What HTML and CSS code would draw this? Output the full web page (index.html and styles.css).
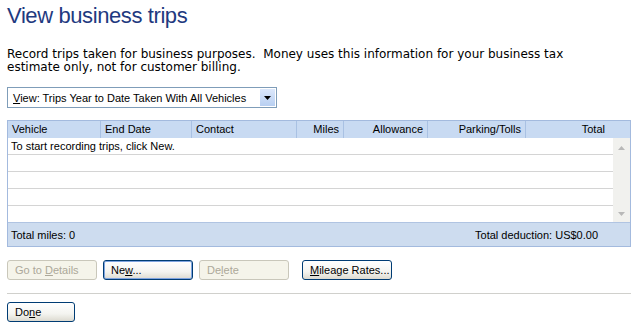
FILE: index.html
```html
<!DOCTYPE html>
<html lang="en">

<head>
    <meta charset="UTF-8">
    <title>View business trips</title>
    <link rel="stylesheet" href="styles.css">
</head>

<body>
    <div class="page">
        <h1 class="title">View business trips</h1>
        <p class="intro">Record trips taken for business purposes.&nbsp; Money uses this information for your business tax estimate only, not for customer billing.</p>

        <div class="select">
            <span class="select-text"><u>V</u>iew: Trips Year to Date Taken With All Vehicles</span>
            <span class="select-btn">
                <svg width="7" height="4" viewBox="0 0 7 4"><path d="M0 0H7L3.5 4Z" fill="#000"/></svg>
            </span>
        </div>

        <div class="grid">
            <div class="head">
                <span class="c1">Vehicle</span>
                <span class="c2">End Date</span>
                <span class="c3">Contact</span>
                <span class="c4 num">Miles</span>
                <span class="c5 num">Allowance</span>
                <span class="c6 num">Parking/Tolls</span>
                <span class="c7 num">Total</span>
            </div>
            <div class="body">
                <div class="rows">
                    <div class="row">To start recording trips, click New.</div>
                    <div class="row"></div>
                    <div class="row"></div>
                    <div class="row"></div>
                    <div class="row last"></div>
                </div>
                <div class="scroll">
                    <svg width="7" height="4" viewBox="0 0 7 4"><path d="M0 4H7L3.5 0Z" fill="#b8b8b8"/></svg>
                    <svg width="7" height="4" viewBox="0 0 7 4"><path d="M0 0H7L3.5 4Z" fill="#b8b8b8"/></svg>
                </div>
            </div>
            <div class="foot">
                <span>Total miles: 0</span>
                <span>Total deduction: US$0.00</span>
            </div>
        </div>

        <div class="actions">
            <button class="btn" disabled>Go to <u>D</u>etails</button>
            <button class="btn focus">Ne<u>w</u>...</button>
            <button class="btn" disabled>De<u>l</u>ete</button>
            <button class="btn wide-gap"><u>M</u>ileage Rates...</button>
        </div>
        <hr class="sep">
        <button class="btn done">Do<u>n</u>e</button>
    </div>
</body>

</html>
```

FILE: styles.css
```css
body {
    margin: 0;
    background: #fff;
    font-family: "Liberation Sans", Arial, sans-serif;
    font-size: 11px;
    color: #000;
}

.page {
    padding: 0 6px 0 7px;
}

.title {
    margin: 0;
    padding-top: 3px;
    height: 30px;
    font-size: 22px;
    font-weight: normal;
    color: #1f3a80;
    line-height: 26px;
    letter-spacing: -0.4px;
}

.intro {
    margin: 15px 0 0;
    width: 600px;
    font-family: "DejaVu Sans", sans-serif;
    font-size: 12px;
    line-height: 13px;
    letter-spacing: 0;
}

.select {
    margin-top: 13px;
    width: 268px;
    height: 19px;
    border: 1px solid #7f9db9;
    display: flex;
    align-items: center;
    justify-content: space-between;
}

.select-text {
    padding-left: 5px;
}

.select-btn {
    width: 15px;
    height: 17px;
    margin-right: 1px;
    background: linear-gradient(#dce8fb, #b8cff2);
    display: flex;
    align-items: center;
    justify-content: center;
}

.grid {
    margin-top: 12px;
    width: 622px;
    border: 1px solid #a3bade;
}

.head {
    display: flex;
    height: 17px;
    background: #c8daf2;
    line-height: 16px;
}

.head span {
    box-sizing: border-box;
    padding: 0 4px;
    border-right: 1px solid #a9c1e3;
}

.head .num {
    text-align: right;
}

.head .c7 {
    border-right: none;
    padding-right: 25px;
}

.c1 { width: 93px; }
.c2 { width: 91px; }
.c3 { width: 105px; }
.c4 { width: 47px; }
.c5 { width: 84px; }
.c6 { width: 98px; }
.c7 { width: 104px; }

.body {
    display: flex;
}

.rows {
    flex: 1;
}

.row {
    height: 16px;
    border-bottom: 1px solid #d4d4d4;
    padding-left: 3px;
    line-height: 16px;
}

.row.last {
    border-bottom: none;
    height: 16px;
}

.scroll {
    width: 17px;
    background: #f1f1ee;
    display: flex;
    flex-direction: column;
    justify-content: space-between;
    align-items: center;
    padding: 8px 0 6px;
    box-sizing: border-box;
}

.foot {
    display: flex;
    justify-content: space-between;
    height: 23px;
    line-height: 24px;
    padding: 0 32px 0 3px;
    background: #cddcef;
    border-top: 1px solid #b0c4e2;
}

.actions {
    margin-top: 13px;
    display: flex;
    gap: 6px;
}

.btn {
    width: 90px;
    height: 20px;
    padding: 0 0 0 7px;
    text-align: left;
    white-space: nowrap;
    font-family: inherit;
    font-size: 11px;
    color: #000;
    border: 1px solid #003c74;
    border-radius: 3px;
    background: linear-gradient(#ffffff, #f4f4f0 60%, #dcdad0);
}

.btn:disabled {
    color: #aca899;
    border-color: #c9c7ba;
    background: #f5f4ea;
}

.btn.focus {
    box-shadow: inset 0 0 0 1px #7fa4e0;
}

.wide-gap {
    margin-left: 7px;
}

.sep {
    margin: 13px 0 0;
    border: none;
    border-top: 1px solid #d0d0cc;
}

.done {
    margin-top: 8px;
    width: 68px;
}
```
